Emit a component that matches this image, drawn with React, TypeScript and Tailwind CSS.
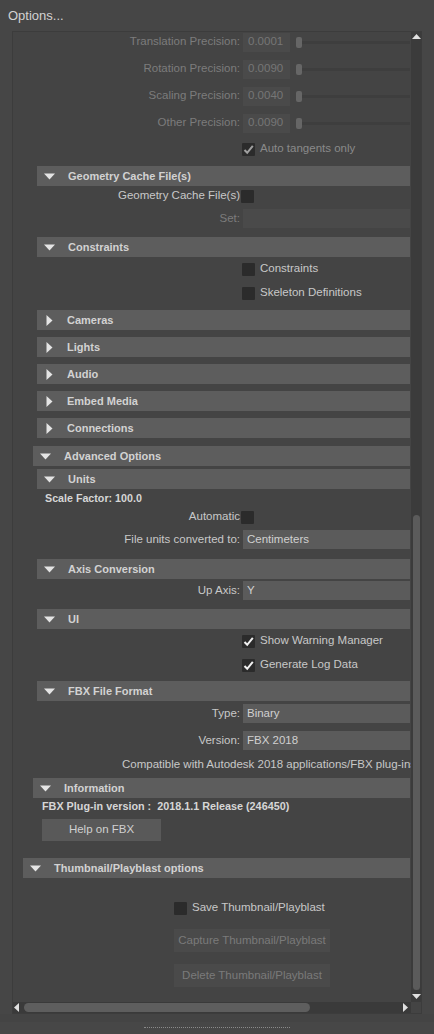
import React from "react";

const DownTri = ({ c = "#e4e4e4" }: { c?: string }) => (
  <svg width="11" height="7" viewBox="0 0 11 7"><path d="M0 0.5 H11 L5.5 6.5 Z" fill={c} /></svg>
);
const RightTri = () => (
  <svg width="7" height="11" viewBox="0 0 7 11"><path d="M0.5 0 L6.5 5.5 L0.5 11 Z" fill="#e4e4e4" /></svg>
);

function Header({ title, open = true, cls }: { title: string; open?: boolean; cls: string }) {
  return (
    <div className={`flex h-[20px] shrink-0 items-center bg-[#5d5d5d] ${cls}`}>
      {open ? (
        <div className="flex w-[31px] shrink-0 pl-[7px]"><DownTri /></div>
      ) : (
        <div className="flex w-[30px] shrink-0 pl-[9px]"><RightTri /></div>
      )}
      <span className="whitespace-nowrap text-[11px] font-bold text-[#d2d2d2]">{title}</span>
    </div>
  );
}

function Check({ checked = false, dim = false }: { checked?: boolean; dim?: boolean }) {
  return (
    <div className="flex h-[13px] w-[13px] shrink-0 items-center justify-center rounded-[1px] bg-[#2b2b2b]">
      {checked && (
        <svg width="11" height="11" viewBox="0 0 11 11">
          <path d="M1.5 6 L4.2 8.8 L9.8 1.8" stroke={dim ? "#a0a0a0" : "#f0f0f0"} strokeWidth="2" fill="none" />
        </svg>
      )}
    </div>
  );
}

function PrecRow({ label, value, cls }: { label: string; value: string; cls: string }) {
  return (
    <div className={`flex h-[20px] shrink-0 items-center ${cls}`}>
      <div className="w-[227px] shrink-0 text-right text-[#7c7c7c]">{label}</div>
      <div className="ml-[3px] flex h-[19px] w-[47px] shrink-0 items-center bg-[#4a4a4a] pl-[5px] text-[#767676]">{value}</div>
      <div className="ml-[6px] h-[11px] w-[6px] shrink-0 rounded-[2px] bg-[#666666]" />
      <div className="h-[3px] flex-1 bg-[#3e3e3e]" />
    </div>
  );
}

function CheckRow({ label, checked, dim, cls }: { label: string; checked?: boolean; dim?: boolean; cls: string }) {
  return (
    <div className={`flex h-[20px] shrink-0 items-center ${cls}`}>
      <div className="w-[229px] shrink-0" />
      <Check checked={checked} dim={dim} />
      <span className={`ml-[5px] whitespace-nowrap ${dim ? "text-[#8a8a8a]" : "text-[#c8c8c8]"}`}>{label}</span>
    </div>
  );
}

function LabelCheck({ label, cls }: { label: string; cls: string }) {
  return (
    <div className={`flex h-[20px] shrink-0 items-center ${cls}`}>
      <div className="w-[227px] shrink-0 text-right text-[#c8c8c8]">{label}</div>
      <div className="ml-[1px]"><Check /></div>
    </div>
  );
}

function FieldRow({ label, value, cls, dim = false }: { label: string; value: string; cls: string; dim?: boolean }) {
  return (
    <div className={`flex h-[19px] shrink-0 items-center ${cls}`}>
      <div className={`w-[227px] shrink-0 text-right ${dim ? "text-[#7c7c7c]" : "text-[#c8c8c8]"}`}>{label}</div>
      <div className={`ml-[3px] flex h-[19px] flex-1 items-center pl-[4px] text-[#d0d0d0] ${dim ? "bg-[#4a4a4a]" : "bg-[#5b5b5b]"}`}>{value}</div>
    </div>
  );
}

export default function App() {
  return (
    <div className="flex h-[1034px] w-[434px] flex-col overflow-hidden bg-[#464646] font-['Liberation_Sans',_Arial,_sans-serif] text-[11.5px] leading-none">
      <div className="flex h-[31px] shrink-0 items-center pl-[8px] text-[13px] text-[#d2d2d2]">Options...</div>
      <div className="ml-[12px] flex h-[983px] w-[410px] shrink-0 flex-col border border-[#3c3c3c] bg-[#444444]">
        <div className="flex h-[970px] shrink-0">
          <div className="h-[970px] w-[398px] shrink-0 overflow-hidden">
            <div className="flex w-[470px] flex-col pr-[73px]">
              <PrecRow label="Translation Precision:" value="0.0001" cls="" />
              <PrecRow label="Rotation Precision:" value="0.0090" cls="mt-[7px]" />
              <PrecRow label="Scaling Precision:" value="0.0040" cls="mt-[7px]" />
              <PrecRow label="Other Precision:" value="0.0090" cls="mt-[7px]" />
              <CheckRow label="Auto tangents only" checked dim cls="mt-[6px]" />

              <Header title="Geometry Cache File(s)" cls="mt-[7px] ml-[24px]" />
              <LabelCheck label="Geometry Cache File(s)" cls="" />
              <FieldRow label="Set:" value="" dim cls="mt-[3px]" />

              <Header title="Constraints" cls="mt-[9px] ml-[24px]" />
              <CheckRow label="Constraints" cls="mt-[2px]" />
              <CheckRow label="Skeleton Definitions" cls="mt-[4px]" />

              <Header title="Cameras" open={false} cls="mt-[7px] ml-[24px]" />
              <Header title="Lights" open={false} cls="mt-[7px] ml-[24px]" />
              <Header title="Audio" open={false} cls="mt-[7px] ml-[24px]" />
              <Header title="Embed Media" open={false} cls="mt-[7px] ml-[24px]" />
              <Header title="Connections" open={false} cls="mt-[7px] ml-[24px]" />

              <Header title="Advanced Options" cls="mt-[8px] ml-[20px]" />
              <Header title="Units" cls="mt-[3px] ml-[24px]" />
              <div className="flex h-[18px] shrink-0 items-center pl-[32px] text-[10.7px] font-bold text-[#d6d6d6]">Scale Factor: 100.0</div>
              <LabelCheck label="Automatic" cls="" />
              <FieldRow label="File units converted to:" value="Centimeters" cls="mt-[3px]" />

              <Header title="Axis Conversion" cls="mt-[10px] ml-[24px]" />
              <FieldRow label="Up Axis:" value="Y" cls="mt-[2px]" />

              <Header title="UI" cls="mt-[9px] ml-[24px]" />
              <CheckRow label="Show Warning Manager" checked cls="mt-[2px]" />
              <CheckRow label="Generate Log Data" checked cls="mt-[4px]" />

              <Header title="FBX File Format" cls="mt-[6px] ml-[24px]" />
              <FieldRow label="Type:" value="Binary" cls="mt-[3px]" />
              <FieldRow label="Version:" value="FBX 2018" cls="mt-[8px]" />
              <div className="mt-[5px] flex h-[20px] shrink-0 items-center whitespace-nowrap pl-[109px] text-[#c8c8c8]">
                Compatible with Autodesk 2018 applications/FBX plug-ins
              </div>

              <Header title="Information" cls="mt-[3px] ml-[20px]" />
              <div className="flex h-[16px] shrink-0 items-center whitespace-nowrap pl-[29px] text-[10.8px] font-bold text-[#d6d6d6]">
                FBX Plug-in version :&nbsp; 2018.1.1 Release (246450)
              </div>
              <div className="mt-[5px] ml-[29px] flex h-[22px] w-[119px] shrink-0 items-center justify-center bg-[#595959] text-[#d0d0d0]">
                Help on FBX
              </div>

              <Header title="Thumbnail/Playblast options" cls="mt-[17px] ml-[10px]" />
              <div className="mt-[20px] flex h-[20px] shrink-0 items-center pl-[161px]">
                <Check />
                <span className="ml-[5px] whitespace-nowrap text-[#c8c8c8]">Save Thumbnail/Playblast</span>
              </div>
              <div className="mt-[11px] ml-[161px] flex h-[23px] w-[156px] shrink-0 items-center justify-center bg-[#4a4a4a] text-[#7a7a7a]">
                Capture Thumbnail/Playblast
              </div>
              <div className="mt-[12px] ml-[161px] flex h-[23px] w-[156px] shrink-0 items-center justify-center bg-[#4a4a4a] text-[#7a7a7a]">
                Delete Thumbnail/Playblast
              </div>
            </div>
          </div>
          <div className="flex h-[970px] w-[10px] shrink-0 flex-col items-center bg-[#3b3b3b]">
            <svg className="mt-[2px] shrink-0" width="9" height="5" viewBox="0 0 9 5"><path d="M0 5 L4.5 0 L9 5 Z" fill="#e0e0e0" /></svg>
            <div className="mt-[476px] h-[475px] w-[7px] shrink-0 rounded-full bg-[#5b5b5b]" />
            <svg className="mt-[4px] shrink-0" width="9" height="5" viewBox="0 0 9 5"><path d="M0 0 L9 0 L4.5 5 Z" fill="#e0e0e0" /></svg>
          </div>
        </div>
        <div className="flex h-[11px] shrink-0">
          <div className="flex h-[11px] w-[398px] shrink-0 items-center bg-[#3a3a3a]">
            <svg className="ml-[1px] shrink-0" width="5" height="9" viewBox="0 0 5 9"><path d="M5 0 L0 4.5 L5 9 Z" fill="#e0e0e0" /></svg>
            <div className="ml-[5px] h-[9px] w-[286px] shrink-0 rounded-full bg-[#5e5e5e]" />
            <div className="flex-1" />
            <svg className="mr-[3px] shrink-0" width="5" height="9" viewBox="0 0 5 9"><path d="M0 0 L5 4.5 L0 9 Z" fill="#e0e0e0" /></svg>
          </div>
          <div className="h-[11px] w-[10px] shrink-0 bg-[#444444]" />
        </div>
      </div>
      <div className="flex flex-1 flex-col">
        <div className="h-[8px] bg-[#444444]" />
        <div className="flex-1 bg-[#474747] pt-[5px]">
          <div className="ml-[144px] w-[146px] border-t border-dotted border-[#8a8a8a]" />
        </div>
      </div>
    </div>
  );
}
